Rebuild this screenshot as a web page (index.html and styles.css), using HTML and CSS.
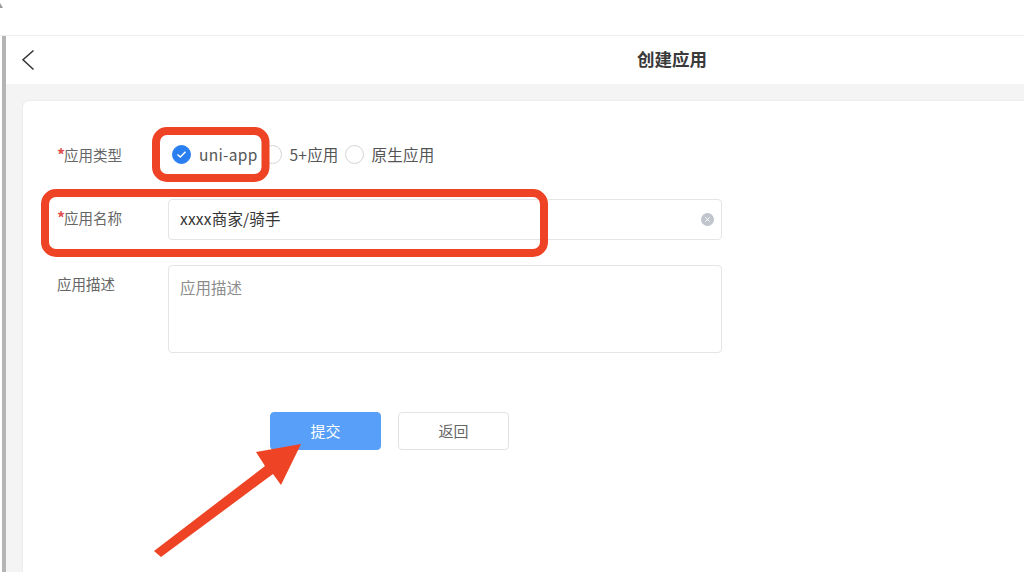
FILE: index.html
```html
<!DOCTYPE html>
<html lang="zh-CN">
<head>
    <meta charset="UTF-8">
    <meta name="viewport" content="width=device-width, initial-scale=1.0">
    <title>创建应用</title>
    <link rel="stylesheet" href="styles.css">
</head>
<body>
    <div class="topbar"></div>
    <div class="app">
        <div class="rail"></div>
        <div class="page">
            <div class="nav">
                <svg class="back-icon" width="14" height="22" viewBox="0 0 14 22">
                    <path d="M12.5 1.5 L2 10.8 L12.5 20.5" fill="none" stroke="#333" stroke-width="1.5"/>
                </svg>
                <div class="nav-title">创建应用</div>
            </div>
            <div class="content">
                <div class="card">
                    <div class="form-row type-row">
                        <label class="form-label"><span class="star">*</span>应用类型</label>
                        <div class="radio-group">
                            <span class="radio-item first">
                                <span class="radio checked">
                                    <svg width="11" height="9" viewBox="0 0 11 9">
                                        <path d="M1.5 4.5 L4.3 7 L9.5 1.8" fill="none" stroke="#fff" stroke-width="1.5"/>
                                    </svg>
                                </span>
                                uni-app
                            </span>
                            <span class="radio-item"><span class="radio"></span>5+应用</span>
                            <span class="radio-item"><span class="radio"></span>原生应用</span>
                        </div>
                    </div>
                    <div class="form-row name-row">
                        <label class="form-label"><span class="star">*</span>应用名称</label>
                        <div class="input-box">
                            <input class="text-input" type="text" value="xxxx商家/骑手">
                            <span class="clear-icon">
                                <svg width="13" height="13" viewBox="0 0 13 13">
                                    <circle cx="6.5" cy="6.5" r="6.5" fill="#c0c4cc"/>
                                    <path d="M4.4 4.4 L8.6 8.6 M8.6 4.4 L4.4 8.6" stroke="#fff" stroke-width="1"/>
                                </svg>
                            </span>
                        </div>
                    </div>
                    <div class="form-row">
                        <label class="form-label">应用描述</label>
                        <textarea class="text-area" placeholder="应用描述"></textarea>
                    </div>
                    <div class="actions">
                        <button class="btn primary">提交</button>
                        <button class="btn">返回</button>
                    </div>
                </div>
            </div>
        </div>
    </div>

    <!-- red markup drawn on top of the screenshot -->
    <svg class="markup" width="1024" height="572" viewBox="0 0 1024 572">
        <polygon points="0,3 3,8 0,8" fill="#9a9a9a"/>
        <rect x="156" y="131" width="109.5" height="47" rx="11" fill="none" stroke="#ee4324" stroke-width="8"/>
        <rect x="45" y="193" width="499" height="60" rx="11" fill="none" stroke="#ee4324" stroke-width="8"/>
        <polygon points="154,551 265,466 256,452 301,444 281,485 273,474 161,557" fill="#ee4324"/>
    </svg>
</body>
</html>
```

FILE: styles.css
```css
* {
    box-sizing: border-box;
}

html, body {
    height: 100%;
}

body {
    margin: 0;
    overflow: hidden;
    position: relative;
    background-color: #fff;
    color: #555;
    font-family: "Noto Sans CJK SC", "Liberation Sans", sans-serif;
    font-size: 15.5px;
}

.topbar {
    height: 35px;
}

.app {
    display: flex;
    height: 537px;
    border-top: 1px solid #eee;
    padding-left: 2px;
}

.rail {
    width: 4px;
    background-color: #b4b4b4;
}

.page {
    flex-grow: 1;
    display: flex;
    flex-direction: column;
}

.nav {
    height: 48px;
    flex-shrink: 0;
    display: flex;
    align-items: center;
    padding-left: 15px;
    background-color: #fff;
}

.nav-title {
    margin-left: 602px;
    padding-bottom: 4px;
    font-size: 17.5px;
    font-weight: 700;
    color: #3a3a3a;
}

.back-icon {
    flex-shrink: 0;
    margin-top: -1px;
}

.content {
    flex-grow: 1;
    padding: 17px 0 0 17px;
    background-color: #f4f4f4;
}

.card {
    height: 100%;
    padding: 33px 0 0 34px;
    background-color: #fff;
    border-radius: 6px 0 0 0;
    box-shadow: 0 0 3px rgba(0, 0, 0, 0.08);
}

.form-row {
    display: flex;
    margin-bottom: 24px;
}

.name-row {
    margin-bottom: 25px;
}

.type-row {
    align-items: center;
    height: 40px;
    margin-bottom: 25px;
}

.form-label {
    width: 111px;
    flex-shrink: 0;
    padding-top: 8px;
    font-size: 14.5px;
    line-height: 22px;
    color: #666;
}

.type-row .form-label {
    padding-top: 0;
}

.name-row .form-label {
    padding-top: 7px;
}

.star {
    display: inline-block;
    width: 7px;
    color: #dd524d;
    font-size: 16px;
    font-weight: 700;
}

.radio-group {
    display: flex;
    align-items: center;
}

.radio-item {
    display: flex;
    align-items: center;
    margin-right: 6px;
    white-space: nowrap;
    letter-spacing: 0.2px;
}

.radio-item.first {
    margin-left: 4px;
    margin-right: 5px;
    letter-spacing: 0.3px;
}

.radio {
    display: flex;
    align-items: center;
    justify-content: center;
    width: 19px;
    height: 19px;
    margin-right: 8px;
    border: 1px solid #d5d5d5;
    border-radius: 50%;
    background-color: #fff;
}

.radio.checked {
    background-color: #2a7ff0;
    border-color: #2a7ff0;
}

.input-box {
    position: relative;
    width: 554px;
}

.text-input,
.text-area {
    display: block;
    width: 100%;
    padding: 0 11px;
    border: 1px solid #e5e5e5;
    border-radius: 4px;
    background-color: #fff;
    color: #333;
    font-family: inherit;
    font-size: 15.5px;
    outline: none;
}

.text-input {
    height: 41px;
    padding-bottom: 3px;
    letter-spacing: 0.2px;
}

.text-area {
    width: 554px;
    height: 88px;
    padding-top: 9px;
    line-height: 24px;
    resize: none;
}

.text-area::placeholder {
    color: #8c8c8c;
    opacity: 1;
}

.clear-icon {
    position: absolute;
    top: 14px;
    right: 8px;
    display: flex;
}

.actions {
    display: flex;
    gap: 17px;
    margin-top: 59px;
    padding-left: 213px;
}

.btn {
    width: 111px;
    height: 38px;
    padding: 0 0 2px;
    border: 1px solid #e2e2e6;
    border-radius: 4px;
    background-color: #fff;
    color: #666;
    font-family: inherit;
    font-size: 15px;
    cursor: pointer;
}

.btn.primary {
    background-color: #589ffa;
    border-color: #589ffa;
    color: #fff;
}

.markup {
    position: absolute;
    top: 0;
    left: 0;
    pointer-events: none;
}
```
